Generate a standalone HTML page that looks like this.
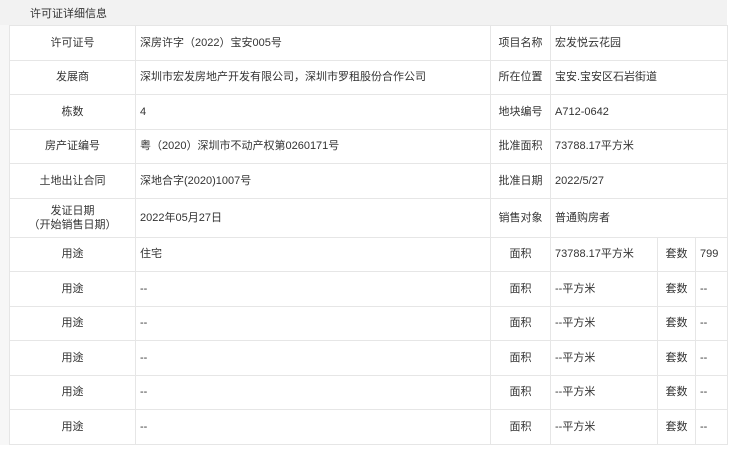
<!DOCTYPE html>
<html><head><meta charset="utf-8"><style>
body{margin:0;width:750px;height:450px;background:#fff;font-family:"Liberation Sans","Noto Sans CJK SC",sans-serif;font-size:11px;color:#333;position:relative;overflow:hidden}
.hd{position:absolute;left:0;top:0;width:727px;height:25px;background:#f2f2f2;}
.hd span{position:absolute;left:30px;top:5px}
.strip{position:absolute;left:0;top:25px;width:9px;height:420px;background:#f7f7f7}
table{position:absolute;left:9px;top:25px;border-collapse:collapse;table-layout:fixed;width:718px}
td{border:1px solid #e6e6e6;padding:0 0 0 4px;height:33.5px;line-height:14px}
td.l{text-align:center;padding:0}
</style></head><body>
<div class="hd"><span>许可证详细信息</span></div>
<div class="strip"></div>
<table>
<colgroup><col style="width:126px"><col style="width:355px"><col style="width:60px"><col style="width:107px"><col style="width:38px"><col style="width:32px"></colgroup>
<tr><td class="l">许可证号</td><td>深房许字（2022）宝安005号</td><td class="l">项目名称</td><td colspan="3">宏发悦云花园</td></tr>
<tr><td class="l">发展商</td><td>深圳市宏发房地产开发有限公司，深圳市罗租股份合作公司</td><td class="l">所在位置</td><td colspan="3">宝安.宝安区石岩街道</td></tr>
<tr><td class="l">栋数</td><td>4</td><td class="l">地块编号</td><td colspan="3">A712-0642</td></tr>
<tr><td class="l">房产证编号</td><td>粤（2020）深圳市不动产权第0260171号</td><td class="l">批准面积</td><td colspan="3">73788.17平方米</td></tr>
<tr><td class="l">土地出让合同</td><td>深地合字(2020)1007号</td><td class="l">批准日期</td><td colspan="3">2022/5/27</td></tr>
<tr><td class="l" style="height:38px">发证日期<br>（开始销售日期）</td><td>2022年05月27日</td><td class="l">销售对象</td><td colspan="3">普通购房者</td></tr>
<tr><td class="l">用途</td><td>住宅</td><td class="l">面积</td><td>73788.17平方米</td><td class="l">套数</td><td>799</td></tr>
<tr><td class="l">用途</td><td>--</td><td class="l">面积</td><td>--平方米</td><td class="l">套数</td><td>--</td></tr>
<tr><td class="l">用途</td><td>--</td><td class="l">面积</td><td>--平方米</td><td class="l">套数</td><td>--</td></tr>
<tr><td class="l">用途</td><td>--</td><td class="l">面积</td><td>--平方米</td><td class="l">套数</td><td>--</td></tr>
<tr><td class="l">用途</td><td>--</td><td class="l">面积</td><td>--平方米</td><td class="l">套数</td><td>--</td></tr>
<tr><td class="l">用途</td><td>--</td><td class="l">面积</td><td>--平方米</td><td class="l">套数</td><td>--</td></tr>
</table>
</body></html>
